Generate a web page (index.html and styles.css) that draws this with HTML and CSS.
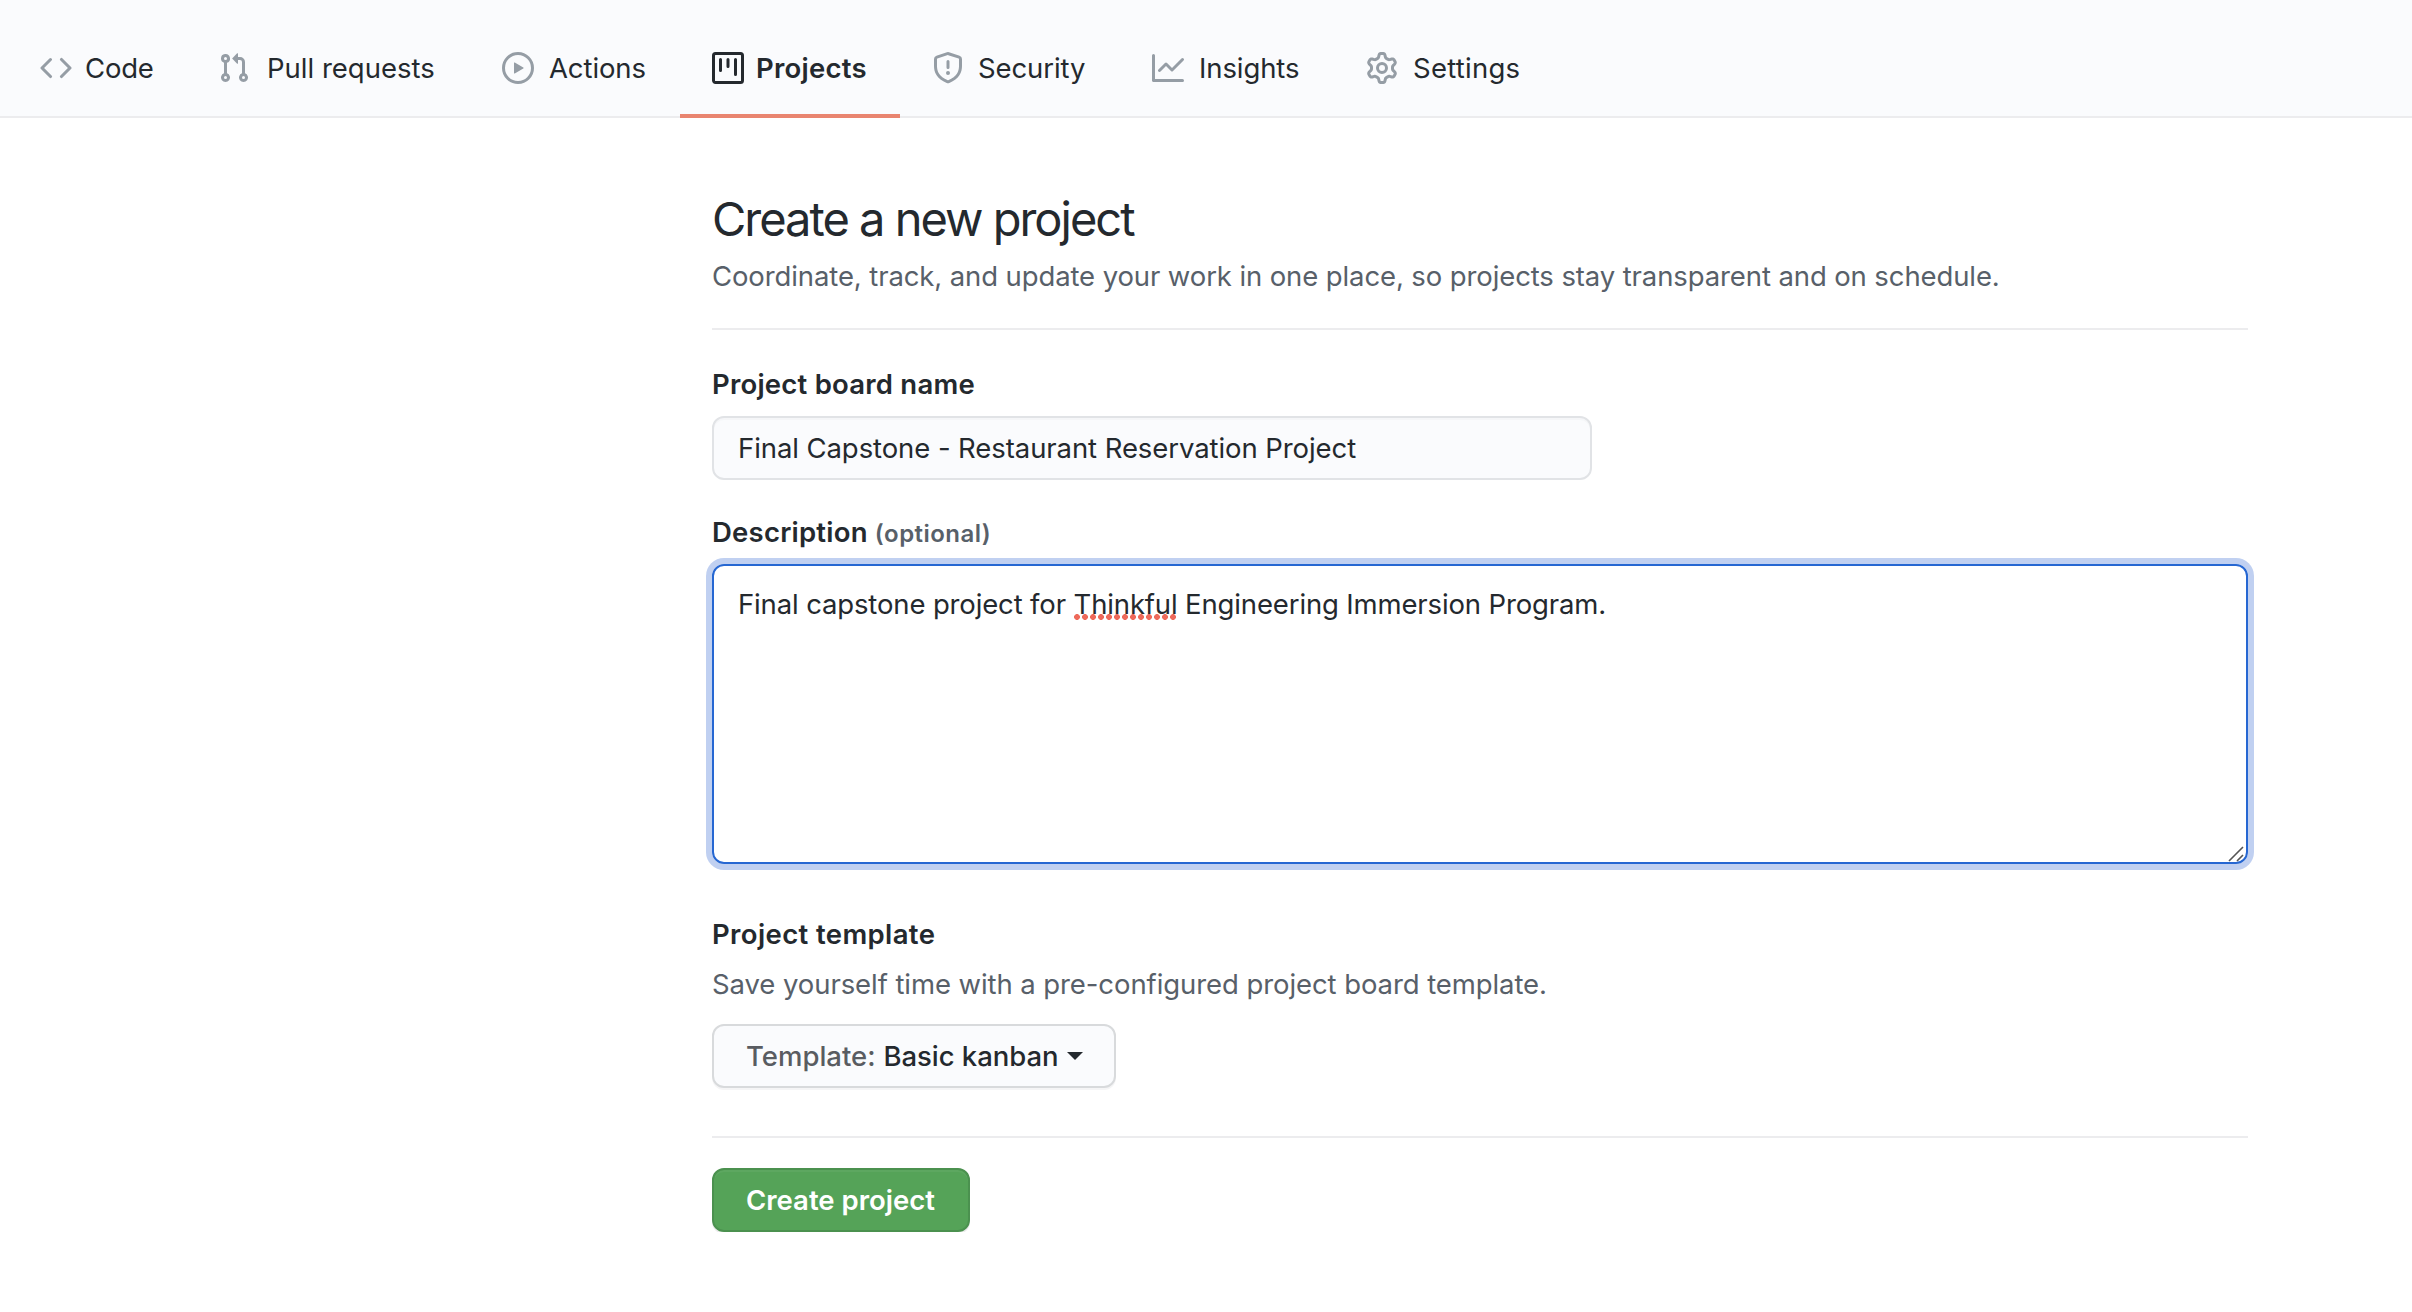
FILE: index.html
```html
<!DOCTYPE html>
<html lang="en">
<head>
<meta charset="utf-8">
<title>Create a new project</title>
<link rel="stylesheet" href="styles.css">
</head>
<body>
<nav class="repo-nav">
  <a class="tab tab-code"><svg class="icon" viewBox="0 0 16 16"><path fill-rule="evenodd" d="M4.72 3.22a.75.75 0 011.06 1.06L2.06 8l3.72 3.72a.75.75 0 11-1.06 1.06L.47 8.53a.75.75 0 010-1.06l4.25-4.25zm6.56 0a.75.75 0 10-1.06 1.06L13.94 8l-3.72 3.72a.75.75 0 101.06 1.06l4.25-4.25a.75.75 0 000-1.06l-4.25-4.25z"/></svg><span>Code</span></a>
  <a class="tab tab-pulls"><svg class="icon" viewBox="0 0 16 16"><path fill-rule="evenodd" d="M7.177 3.073L9.573.677A.25.25 0 0110 .854v4.792a.25.25 0 01-.427.177L7.177 3.427a.25.25 0 010-.354zM3.75 2.5a.75.75 0 100 1.5.75.75 0 000-1.5zm-2.25.75a2.25 2.25 0 113 2.122v5.256a2.251 2.251 0 11-1.5 0V5.372A2.25 2.25 0 011.5 3.25zM11 2.5h-1V4h1a1 1 0 011 1v5.628a2.251 2.251 0 101.5 0V5A2.5 2.5 0 0011 2.5zm1 10.25a.75.75 0 111.5 0 .75.75 0 01-1.5 0zM3.75 12a.75.75 0 100 1.5.75.75 0 000-1.5z"/></svg><span>Pull requests</span></a>
  <a class="tab tab-actions"><svg class="icon" viewBox="0 0 16 16"><path fill-rule="evenodd" d="M1.5 8a6.5 6.5 0 1113 0 6.5 6.5 0 01-13 0zM8 0a8 8 0 100 16A8 8 0 008 0zM6.379 5.227A.25.25 0 006 5.442v5.117a.25.25 0 00.379.214l4.264-2.559a.25.25 0 000-.428L6.379 5.227z"/></svg><span>Actions</span></a>
  <a class="tab tab-projects selected"><svg class="icon" viewBox="0 0 16 16"><path fill-rule="evenodd" d="M1.75 0A1.75 1.75 0 000 1.75v12.5C0 15.216.784 16 1.75 16h12.5A1.75 1.75 0 0016 14.25V1.75A1.75 1.75 0 0014.25 0H1.75zM1.5 1.75a.25.25 0 01.25-.25h12.5a.25.25 0 01.25.25v12.5a.25.25 0 01-.25.25H1.75a.25.25 0 01-.25-.25V1.75zM11.75 3a.75.75 0 00-.75.75v7.5a.75.75 0 001.5 0v-7.5a.75.75 0 00-.75-.75zm-8.25.75a.75.75 0 011.5 0v5.5a.75.75 0 01-1.5 0v-5.5zM8 3a.75.75 0 00-.75.75v3.5a.75.75 0 001.5 0v-3.5A.75.75 0 008 3z"/></svg><span>Projects</span></a>
  <a class="tab tab-security"><svg class="icon" viewBox="0 0 16 16"><path fill-rule="evenodd" d="M7.467.133a1.75 1.75 0 011.066 0l5.25 1.68A1.75 1.75 0 0115 3.48V7c0 1.566-.32 3.182-1.303 4.682-.983 1.498-2.585 2.813-5.032 3.855a1.7 1.7 0 01-1.33 0c-2.447-1.042-4.049-2.357-5.032-3.855C1.32 10.182 1 8.566 1 7V3.48a1.75 1.75 0 011.217-1.667l5.25-1.68zm.61 1.429a.25.25 0 00-.153 0l-5.25 1.68a.25.25 0 00-.174.238V7c0 1.358.275 2.666 1.057 3.86.784 1.194 2.121 2.34 4.366 3.297a.2.2 0 00.154 0c2.245-.956 3.582-2.104 4.366-3.298C13.225 9.666 13.5 8.36 13.5 7V3.48a.25.25 0 00-.174-.237l-5.25-1.68zM9 10.5a1 1 0 11-2 0 1 1 0 012 0zm-.25-5.75a.75.75 0 10-1.5 0v3a.75.75 0 001.5 0v-3z"/></svg><span>Security</span></a>
  <a class="tab tab-insights"><svg class="icon" viewBox="0 0 16 16"><path fill-rule="evenodd" d="M1.5 1.75a.75.75 0 00-1.5 0v12.5c0 .414.336.75.75.75h14.5a.75.75 0 000-1.5H1.5V1.75zm14.28 2.53a.75.75 0 00-1.06-1.06L10 7.94 7.53 5.47a.75.75 0 00-1.06 0L3.22 8.72a.75.75 0 001.06 1.06L7 7.06l2.47 2.47a.75.75 0 001.06 0l5.25-5.25z"/></svg><span>Insights</span></a>
  <a class="tab tab-settings"><svg class="icon" viewBox="0 0 16 16"><path fill-rule="evenodd" d="M7.429 1.525a6.593 6.593 0 011.142 0c.036.003.108.036.137.146l.289 1.105c.147.56.55.967.997 1.189.174.086.341.183.501.29.417.278.97.423 1.53.27l1.102-.303c.11-.03.175.016.195.046.219.31.41.641.573.989.014.031.022.11-.059.19l-.815.806c-.411.406-.562.957-.53 1.456a4.588 4.588 0 010 .582c-.032.499.119 1.05.53 1.456l.815.806c.08.08.073.159.059.19a6.494 6.494 0 01-.573.99c-.02.029-.086.074-.195.045l-1.103-.303c-.559-.153-1.112-.008-1.529.27-.16.107-.327.204-.5.29-.449.222-.851.628-.998 1.189l-.289 1.105c-.029.11-.101.143-.137.146a6.613 6.613 0 01-1.142 0c-.036-.003-.108-.037-.137-.146l-.289-1.105c-.147-.56-.55-.967-.997-1.189a4.502 4.502 0 01-.501-.29c-.417-.278-.97-.423-1.53-.27l-1.102.303c-.11.03-.175-.016-.195-.046a6.492 6.492 0 01-.573-.989c-.014-.031-.022-.11.059-.19l.815-.806c.411-.406.562-.957.53-1.456a4.587 4.587 0 010-.582c.032-.499-.119-1.05-.53-1.456l-.815-.806c-.08-.08-.073-.159-.059-.19a6.44 6.44 0 01.573-.99c.02-.029.086-.075.195-.045l1.103.303c.559.153 1.112.008 1.529-.27.16-.107.327-.204.5-.29.449-.222.851-.628.998-1.189l.289-1.105c.029-.11.101-.143.137-.146zM8 0c-.236 0-.47.01-.701.03-.743.065-1.29.615-1.458 1.261l-.29 1.106c-.017.066-.078.158-.211.224a5.994 5.994 0 00-.668.386c-.123.082-.233.09-.3.071L3.27 2.776c-.644-.177-1.392.02-1.82.63a7.977 7.977 0 00-.704 1.217c-.315.675-.111 1.422.363 1.891l.815.806c.05.048.098.147.088.294a6.084 6.084 0 000 .772c.01.147-.038.246-.088.294l-.815.806c-.474.469-.678 1.216-.363 1.891.2.428.436.835.704 1.218.428.609 1.176.806 1.82.63l1.103-.303c.066-.019.176-.011.299.071.213.143.436.272.668.386.133.066.194.158.212.224l.289 1.106c.169.646.715 1.196 1.458 1.26a8.094 8.094 0 001.402 0c.743-.064 1.29-.614 1.458-1.26l.29-1.106c.017-.066.078-.158.211-.224a5.98 5.98 0 00.668-.386c.123-.082.233-.09.3-.071l1.102.302c.644.177 1.392-.02 1.82-.63.268-.382.505-.789.704-1.217.315-.675.111-1.422-.364-1.891l-.814-.806c-.05-.048-.098-.147-.088-.294a6.1 6.1 0 000-.772c-.01-.147.039-.246.088-.294l.814-.806c.475-.469.679-1.216.364-1.891a7.992 7.992 0 00-.704-1.218c-.428-.609-1.176-.806-1.82-.63l-1.103.303c-.066.019-.176.011-.299-.071a5.991 5.991 0 00-.668-.386c-.133-.066-.194-.158-.212-.224L10.16 1.29C9.99.645 9.444.095 8.701.031A8.094 8.094 0 008 0zm1.5 8a1.5 1.5 0 11-3 0 1.5 1.5 0 013 0zM11 8a3 3 0 11-6 0 3 3 0 016 0z"/></svg><span>Settings</span></a>
</nav>
<main class="content">
  <header class="heading">
    <h1>Create a new project</h1>
    <p class="subtitle">Coordinate, track, and update your work in one place, so projects stay transparent and on schedule.</p>
  </header>
  <form class="project-form">
    <div class="field name-field">
      <div class="label label-name">Project board name</div>
      <div class="input">Final Capstone - Restaurant Reservation Project</div>
    </div>
    <div class="field">
      <div class="label label-description">Description <span class="optional">(optional)</span></div>
      <div class="textarea">Final capstone project for <span class="misspelled">Thinkful</span> Engineering Immersion Program.<svg class="resizer" viewBox="0 0 16 16"><path d="M1 15L15 1M9 15l6-6"/></svg></div>
    </div>
    <div class="template">
      <div class="label label-template">Project template</div>
      <p class="hint">Save yourself time with a pre-configured project board template.</p>
      <div class="btn btn-select"><span class="prefix">Template:</span><span class="value">Basic kanban</span><span class="caret"></span></div>
    </div>
    <div class="actions">
      <div class="btn btn-primary"><span>Create project</span></div>
    </div>
  </form>
</main>
</body>
</html>
```

FILE: styles.css
```css
* { box-sizing: border-box; }
body {
  margin: 0;
  background: #fff;
  color: #24292e;
  font: 27.5px/42px Inter, "Liberation Sans", sans-serif;
  white-space: nowrap;
}
.repo-nav {
  display: flex;
  height: 118px;
  padding-left: 8px;
  background: #fafbfd;
  border-bottom: 2px solid #ececee;
}
.tab {
  display: flex;
  align-items: center;
  gap: 15px;
  height: 118px;
  padding: 22px 0 0 32px;
  border-bottom: 4px solid transparent;
}
.icon { flex: none; width: 32px; height: 32px; fill: #959da5; }
.tab-code { width: 178px; gap: 13px; letter-spacing: -0.2px; }
.tab-pulls { width: 284px; gap: 17px; }
.tab-actions { width: 210px; letter-spacing: -0.1px; }
.tab-projects { width: 220px; gap: 12px; letter-spacing: 0.25px; }
.tab-security { width: 220px; gap: 14px; letter-spacing: -0.1px; }
.tab-insights { width: 214px; letter-spacing: -0.1px; }
.tab-settings { letter-spacing: 0.25px; }
.selected { font-weight: 600; border-bottom-color: #e98570; }
.selected .icon { fill: #24292e; }

.content { width: 1536px; margin-left: 712px; padding-top: 76px; }
.heading { height: 136px; border-bottom: 2px solid #ececee; }
h1 { margin: 0; font-size: 47px; font-weight: 400; line-height: 50px; letter-spacing: -2px; }
p { margin: 0; color: #586069; }
.subtitle { padding-top: 11px; letter-spacing: -0.11px; }
.label { font-weight: 600; letter-spacing: 0.22px; }
.name-field { padding-top: 33px; }
.input {
  width: 880px;
  height: 64px;
  margin-top: 11px;
  padding: 9px 24px;
  border: 2px solid #e1e3e6;
  border-radius: 12px;
  background: #fafbfd;
  box-shadow: inset 0 2px 0 #f5f6f8;
  letter-spacing: -0.08px;
}
.label-description { height: 42px; margin-top: 31px; }
.optional { font-size: 24px; line-height: 1; color: #586069; letter-spacing: 0.45px; }
.textarea {
  position: relative;
  height: 300px;
  margin-top: 11px;
  padding: 17px 24px;
  border: 2px solid #2667d2;
  border-radius: 12px;
  box-shadow: 0 0 0 6px #c0d0f1;
  letter-spacing: -0.14px;
}
.misspelled {
  background: radial-gradient(circle at 3px 3px, #ee6a5b 2.6px, transparent 3.2px) 0 calc(100% - 1px) / 8px 6px repeat-x;
}
.resizer {
  position: absolute;
  right: 2px;
  bottom: 0;
  width: 16px;
  height: 16px;
  fill: none;
  stroke: #555;
  stroke-width: 1.6;
}
.template { height: 226px; margin-top: 48px; padding-top: 1px; border-bottom: 2px solid #ececee; }
.label-template { letter-spacing: 0.38px; }
.hint { padding-top: 8px; letter-spacing: -0.08px; }
.btn {
  display: flex;
  align-items: center;
  height: 64px;
  padding: 0 32px;
  border: 2px solid #d8dadc;
  border-radius: 12px;
  font-weight: 500;
}
.btn-select { width: 404px; margin-top: 19px; background: #fafbfd; box-shadow: 0 2px 0 #f5f5f6; }
.prefix { color: #595c61; margin-right: 8px; }
.value { letter-spacing: -0.05px; }
.caret { margin-left: 8px; border: 8px solid transparent; border-top-color: #24292e; border-bottom: 0; }
.actions { padding-top: 30px; }
.btn-primary {
  width: 258px;
  color: #fff;
  font-weight: 600;
  background: #55a358;
  border-color: #4b914f;
  box-shadow: 0 2px 0 #ececec, inset 0 2px 0 #5da760;
}
```
